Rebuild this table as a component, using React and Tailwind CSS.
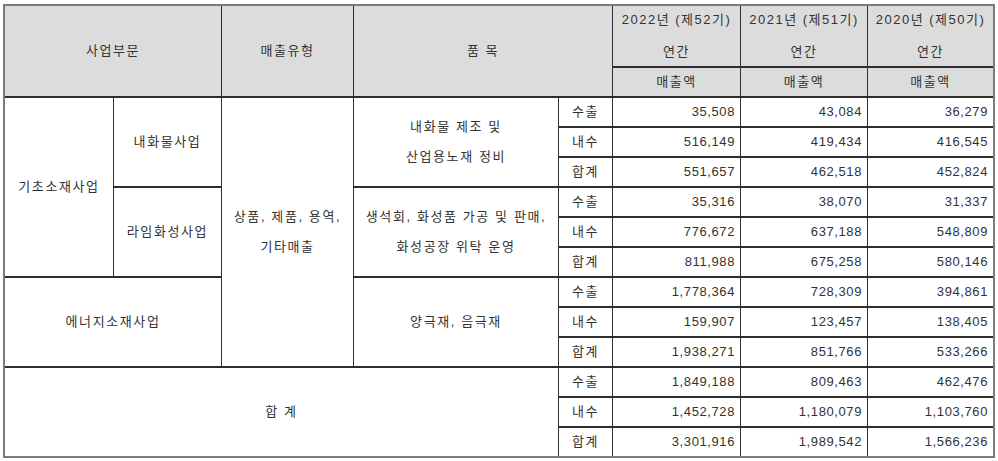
import React from "react";

const rowStarts = [
  "row-start-4",
  "row-start-5",
  "row-start-6",
  "row-start-7",
  "row-start-8",
  "row-start-9",
  "row-start-10",
  "row-start-11",
  "row-start-12",
  "row-start-13",
  "row-start-14",
  "row-start-15",
];

const labels = ["수출", "내수", "합계"];

const data = [
  ["35,508", "43,084", "36,279"],
  ["516,149", "419,434", "416,545"],
  ["551,657", "462,518", "452,824"],
  ["35,316", "38,070", "31,337"],
  ["776,672", "637,188", "548,809"],
  ["811,988", "675,258", "580,146"],
  ["1,778,364", "728,309", "394,861"],
  ["159,907", "123,457", "138,405"],
  ["1,938,271", "851,766", "533,266"],
  ["1,849,188", "809,463", "462,476"],
  ["1,452,728", "1,180,079", "1,103,760"],
  ["3,301,916", "1,989,542", "1,566,236"],
];

const hd = "bg-[#dcdcdc] flex flex-col items-center justify-center text-center tracking-[1.5px]";
const td = "bg-white flex flex-col items-center justify-center text-center tracking-[1.6px]";
const num = "bg-white flex items-center justify-end pr-[5px] tracking-[0.6px]";

export default function App() {
  return (
    <div className="pl-[3px] pt-[4px] bg-white min-h-screen">
      <div className="w-[992px] border-2 border-[#7a7a7a] bg-[#2e2e2e] font-['Liberation_Sans','Noto_Sans_CJK_KR',sans-serif] text-[13px] text-[#333]">
        <div className="grid grid-cols-[108px_107px_131px_204px_53px_127px_126px_125px] grid-rows-[29px_29px_28px_repeat(12,28px)] gap-x-px gap-y-[2px]">
          {/* header */}
          <div className={`${hd} col-start-1 col-span-2 row-start-1 row-span-3`}>사업부문</div>
          <div className={`${hd} col-start-3 row-start-1 row-span-3`}>매출유형</div>
          <div className={`${hd} col-start-4 col-span-2 row-start-1 row-span-3`}>품 목</div>
          <div className={`${hd} col-start-6 row-start-1 row-span-2 leading-[32px]`}>
            <div>2022년 (제52기)</div>
            <div>연간</div>
          </div>
          <div className={`${hd} col-start-7 row-start-1 row-span-2 leading-[32px]`}>
            <div>2021년 (제51기)</div>
            <div>연간</div>
          </div>
          <div className={`${hd} col-start-8 row-start-1 row-span-2 leading-[32px]`}>
            <div>2020년 (제50기)</div>
            <div>연간</div>
          </div>
          <div className={`${hd} col-start-6 row-start-3`}>매출액</div>
          <div className={`${hd} col-start-7 row-start-3`}>매출액</div>
          <div className={`${hd} col-start-8 row-start-3`}>매출액</div>

          {/* left structure */}
          <div className={`${td} col-start-1 row-start-4 row-span-6`}>기초소재사업</div>
          <div className={`${td} col-start-2 row-start-4 row-span-3`}>내화물사업</div>
          <div className={`${td} col-start-2 row-start-7 row-span-3`}>라임화성사업</div>
          <div className={`${td} col-start-1 col-span-2 row-start-10 row-span-3`}>에너지소재사업</div>
          <div className={`${td} col-start-3 row-start-4 row-span-9 leading-[30px]`}>
            <div>상품, 제품, 용역,</div>
            <div>기타매출</div>
          </div>
          <div className={`${td} col-start-4 row-start-4 row-span-3 leading-[30px]`}>
            <div>내화물 제조 및</div>
            <div>산업용노재 정비</div>
          </div>
          <div className={`${td} col-start-4 row-start-7 row-span-3 leading-[30px]`}>
            <div>생석회, 화성품 가공 및 판매,</div>
            <div>화성공장 위탁 운영</div>
          </div>
          <div className={`${td} col-start-4 row-start-10 row-span-3`}>양극재, 음극재</div>
          <div className={`${td} col-start-1 col-span-4 row-start-13 row-span-3`}>합 계</div>

          {/* data rows */}
          {data.map((row, i) => (
            <React.Fragment key={i}>
              <div className={`${td} col-start-5 ${rowStarts[i]}`}>{labels[i % 3]}</div>
              <div className={`${num} col-start-6 ${rowStarts[i]}`}>{row[0]}</div>
              <div className={`${num} col-start-7 ${rowStarts[i]}`}>{row[1]}</div>
              <div className={`${num} col-start-8 ${rowStarts[i]}`}>{row[2]}</div>
            </React.Fragment>
          ))}
        </div>
      </div>
    </div>
  );
}
